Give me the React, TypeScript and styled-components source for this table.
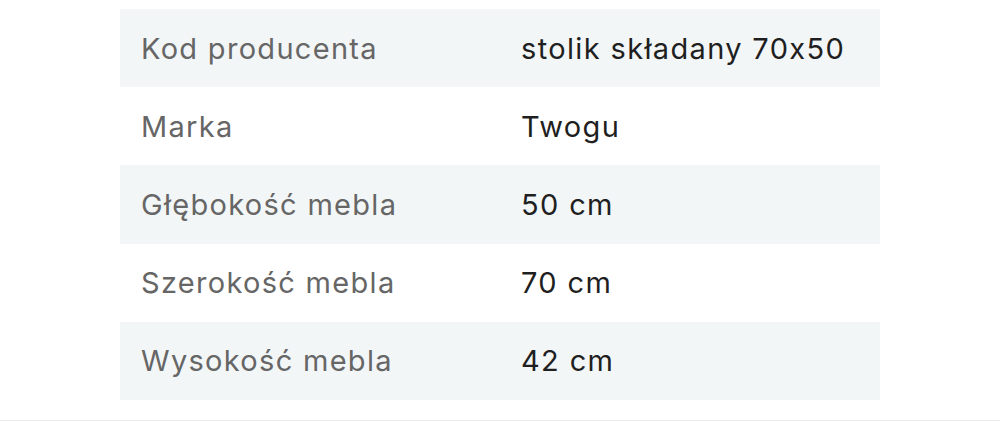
import React from 'react';
import styled, { createGlobalStyle } from 'styled-components';

const GlobalStyle = createGlobalStyle`
  html, body {
    margin: 0;
    padding: 0;
    background: #ffffff;
  }
  body {
    font-family: Inter, "Noto Sans", "Liberation Sans", sans-serif;
  }
`;

const Page = styled.div`
  width: 1000px;
  height: 421px;
  box-sizing: border-box;
  padding-top: 9px;
  border-bottom: 1px solid #ececec;
  overflow: hidden;
`;

const Table = styled.div`
  width: 760px;
  margin: 0 auto;
  display: flex;
  flex-direction: column;
`;

const Row = styled.div<{ $striped: boolean }>`
  display: grid;
  grid-template-columns: 1fr 1fr;
  height: 78.2px;
  align-items: center;
  background: ${({ $striped }) => ($striped ? '#f3f6f7' : 'transparent')};
`;

const Label = styled.div`
  padding-left: 21px;
  font-size: 29px;
  color: #666666;
  letter-spacing: 1.3px;
`;

const Value = styled.div`
  padding-left: 21px;
  font-size: 29px;
  color: #1f1f1f;
  letter-spacing: 1.35px;
`;

const rows = [
  { label: 'Kod producenta', value: 'stolik składany 70x50' },
  { label: 'Marka', value: 'Twogu' },
  { label: 'Głębokość mebla', value: '50 cm' },
  { label: 'Szerokość mebla', value: '70 cm' },
  { label: 'Wysokość mebla', value: '42 cm' },
];

const App: React.FC = () => {
  return (
    <>
      <GlobalStyle />
      <Page>
        <Table>
          {rows.map((r, i) => (
            <Row key={r.label} $striped={i % 2 === 0}>
              <Label>{r.label}</Label>
              <Value>{r.value}</Value>
            </Row>
          ))}
        </Table>
      </Page>
    </>
  );
};

export default App;
